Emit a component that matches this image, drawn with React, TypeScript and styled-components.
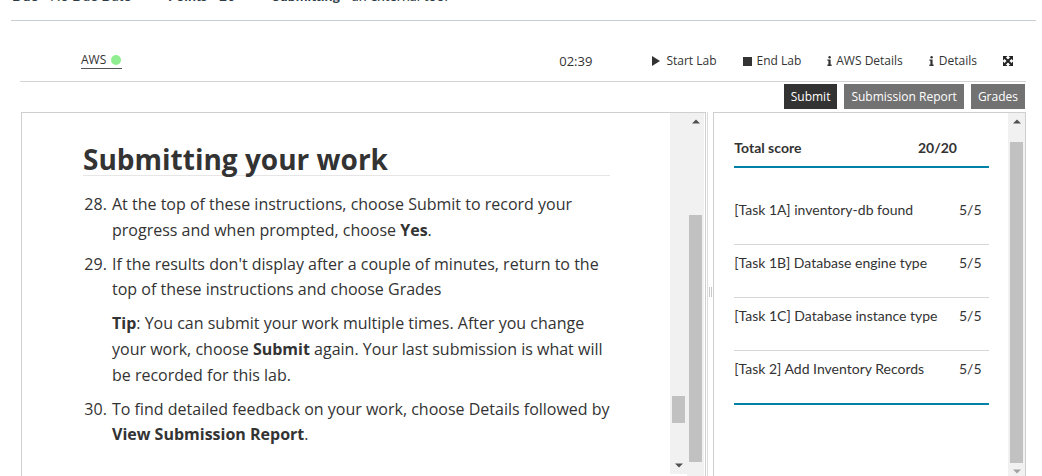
import React from "react";
import styled, { createGlobalStyle } from "styled-components";

const Global = createGlobalStyle`
  html, body { margin: 0; padding: 0; background: #fff; overflow: hidden; }
  body { font-family: "Open Sans", "Liberation Sans", sans-serif; color: #333; }
  * { box-sizing: content-box; }
`;

const Meta = styled.div`
  margin: -14px 6px 0 11px;
  padding-left: 1px;
  height: 34px;
  border-bottom: 1px solid #c7cdd1;
  display: flex;
  font-family: Lato, "Liberation Sans", sans-serif;
  font-size: 14px;
  line-height: 20px;
  color: #2d3b45;
`;

const MetaItem = styled.div`
  display: flex;
  margin-right: 37px;
`;

const MetaTitle = styled.span`
  font-weight: 700;
  margin-right: 12px;
`;

const Lab = styled.div`
  margin-left: 20px;
  width: 1006px;
`;

const Toolbar = styled.div`
  display: flex;
  align-items: flex-start;
  height: 29px;
  padding: 31px 13px 0 0;
  border-bottom: 1px solid #d4d4d4;
  font-size: 12px;
  line-height: 18px;
  color: #333;
`;

const AwsLink = styled.span`
  margin-left: 61px;
  display: inline-flex;
  align-items: center;
  gap: 5px;
  border-bottom: 1px solid #555;
  height: 17px;
  line-height: 17px;
  margin-top: -1px;
`;

const Dot = styled.span`
  width: 10px;
  height: 10px;
  border-radius: 50%;
  background: #90ee90;
  margin-right: 1px;
`;

const Timer = styled.span`
  margin-left: auto;
  margin-right: 60px;
  font-size: 13px;
`;

const ToolItem = styled.span<{ $gap?: number }>`
  display: inline-flex;
  align-items: center;
  height: 18px;
  gap: ${(p) => p.$gap ?? 6}px;
  margin-right: 26px;
  &:last-child { margin-right: 0; }
`;

const ActionRow = styled.div`
  display: flex;
  justify-content: flex-end;
  gap: 7px;
  padding: 2px 1px 0 0;
`;

const Btn = styled.button<{ $dark?: boolean }>`
  height: 25px;
  padding: 0 7px;
  border: none;
  background: ${(p) => (p.$dark ? "#333" : "#727272")};
  color: #fff;
  font-family: "Open Sans", "Liberation Sans", sans-serif;
  font-size: 12px;
  line-height: 25px;
  cursor: pointer;
`;

const Panels = styled.div`
  display: flex;
  margin: 3px 0 0 1px;
  height: 380px;
`;

const LeftPane = styled.div`
  width: 683px;
  border: 1px solid #cfcfcf;
  border-bottom: none;
  padding-right: 1px;
  display: flex;
  align-items: flex-start;
  overflow: hidden;
`;

const Doc = styled.div`
  width: 587px;
  height: 350px;
  padding: 31px 0 0 61px;
  overflow: hidden;
`;

const Heading = styled.h1`
  margin: 0;
  width: 527px;
  font-size: 28px;
  line-height: 31px;
  font-weight: 700;
  color: #333;
  border-bottom: 1px solid #e6e6e6;
`;

const Steps = styled.ol`
  margin: 16px 0 0;
  padding-left: 28px;
  width: 504px;
  font-size: 16px;
  line-height: 25.6px;
  color: #333;
`;

const Step = styled.li`
  margin-bottom: 8.5px;
  padding-left: 1px;
`;

const Tip = styled.p`
  margin: 8.5px 0 0;
  width: 498px;
`;

const ScrollBar = styled.div<{ $h?: number }>`
  width: 17px;
  height: ${(p) => (p.$h ? `${p.$h}px` : "auto")};
  align-self: ${(p) => (p.$h ? "flex-start" : "stretch")};
  background: #f1f1f1;
  display: flex;
  flex-direction: column;
  flex-shrink: 0;
`;

const ArrowBox = styled.div`
  height: 17px;
  display: flex;
  align-items: center;
  justify-content: center;
  flex-shrink: 0;
`;

const Track = styled.div`
  flex: 1;
  display: flex;
  flex-direction: column;
`;

const Thumb = styled.div<{ $top: number; $h: number }>`
  margin: ${(p) => p.$top}px 2px 0;
  height: ${(p) => p.$h}px;
  background: #c1c1c1;
`;

const Splitter = styled.div`
  width: 5px;
  margin-left: 1px;
  border-left: 1px solid #dcdcdc;
  display: flex;
  align-items: center;
  justify-content: center;
  padding-bottom: 20px;
`;

const Grip = styled.div`
  width: 1px;
  height: 10px;
  border-left: 1px solid #c8c8c8;
  border-right: 1px solid #c8c8c8;
`;

const RightPane = styled.div`
  width: 311px;
  border: 1px solid #cfcfcf;
  border-bottom: none;
  display: flex;
`;

const Scores = styled.div`
  flex: 1;
  padding: 25px 19px 0 20px;
  font-family: Lato, "Liberation Sans", sans-serif;
  font-size: 14px;
  line-height: 20px;
  color: #333;
`;

const ScoreHead = styled.div`
  display: flex;
  font-weight: 700;
  padding-bottom: 8px;
  border-bottom: 2px solid #0081a8;
`;

const Grow = styled.span`
  flex: 1;
  white-space: nowrap;
`;

const HeadValue = styled.span`
  padding-right: 32px;
`;

const ScoreList = styled.div`
  padding-top: 24px;
  border-bottom: 2px solid #0081a8;
`;

const ScoreRow = styled.div`
  display: flex;
  padding: 8px 0 24px;
  border-bottom: 1px solid #d6d6d6;
  &:last-child { border-bottom: none; }
`;

const RowValue = styled.span`
  width: 30px;
`;

const Up = ({ on }: { on?: boolean }) => (
  <svg width="8" height="5" viewBox="0 0 8 5">
    <path d="M0 4.5 L4 0.5 L8 4.5 Z" fill={on ? "#505050" : "#a3a3a3"} />
  </svg>
);
const Down = ({ on }: { on?: boolean }) => (
  <svg width="8" height="5" viewBox="0 0 8 5">
    <path d="M0 0.5 L8 0.5 L4 4.5 Z" fill={on ? "#505050" : "#a3a3a3"} />
  </svg>
);

const PlayIcon = () => (
  <svg width="8" height="10" viewBox="0 0 8 10">
    <path d="M0 0 L8 5 L0 10 Z" fill="#333" />
  </svg>
);
const StopIcon = () => (
  <svg width="9" height="9" viewBox="0 0 9 9">
    <rect width="9" height="9" fill="#333" />
  </svg>
);
const InfoIcon = () => (
  <svg width="5" height="10" viewBox="0 0 5 10">
    <circle cx="2.6" cy="1.2" r="1.2" fill="#333" />
    <path d="M0.4 3.4 H3.6 V8.6 H4.6 V10 H0.4 V8.6 H1.4 V4.8 H0.4 Z" fill="#333" />
  </svg>
);
const ExpandIcon = () => (
  <svg width="10" height="10" viewBox="0 0 10 10">
    <path d="M2 2 L8 8 M8 2 L2 8" stroke="#222" strokeWidth="2" />
    <path d="M0 0 H4.5 L0 4.5 Z M10 0 V4.5 L5.5 0 Z M0 10 V5.5 L4.5 10 Z M10 10 H5.5 L10 5.5 Z" fill="#222" />
  </svg>
);

const scores = [
  ["[Task 1A] inventory-db found", "5/5"],
  ["[Task 1B] Database engine type", "5/5"],
  ["[Task 1C] Database instance type", "5/5"],
  ["[Task 2] Add Inventory Records", "5/5"],
];

export default function App() {
  return (
    <>
      <Global />
      <Meta>
        <MetaItem>
          <MetaTitle>Due</MetaTitle>No Due Date
        </MetaItem>
        <MetaItem>
          <MetaTitle>Points</MetaTitle>20
        </MetaItem>
        <MetaItem>
          <MetaTitle>Submitting</MetaTitle>an external tool
        </MetaItem>
      </Meta>
      <Lab>
        <Toolbar>
          <AwsLink>
            AWS <Dot />
          </AwsLink>
          <Timer>02:39</Timer>
          <ToolItem>
            <PlayIcon />
            Start Lab
          </ToolItem>
          <ToolItem $gap={5}>
            <StopIcon />
            End Lab
          </ToolItem>
          <ToolItem $gap={4}>
            <InfoIcon />
            AWS Details
          </ToolItem>
          <ToolItem $gap={5}>
            <InfoIcon />
            Details
          </ToolItem>
          <ToolItem>
            <ExpandIcon />
          </ToolItem>
        </Toolbar>
        <ActionRow>
          <Btn $dark>Submit</Btn>
          <Btn>Submission Report</Btn>
          <Btn>Grades</Btn>
        </ActionRow>
        <Panels>
          <LeftPane>
            <Doc>
              <Heading>Submitting your work</Heading>
              <Steps start={28}>
                <Step>
                  At the top of these instructions, choose Submit to record your progress and when
                  prompted, choose <b>Yes</b>.
                </Step>
                <Step>
                  If the results don't display after a couple of minutes, return to the top of these
                  instructions and choose Grades
                  <Tip>
                    <b>Tip</b>: You can submit your work multiple times. After you change your work,
                    choose <b>Submit</b> again. Your last submission is what will be recorded for
                    this lab.
                  </Tip>
                </Step>
                <Step>
                  To find detailed feedback on your work, choose Details followed by{" "}
                  <b>View Submission Report</b>.
                </Step>
              </Steps>
            </Doc>
            <ScrollBar $h={361}>
              <Track>
                <Thumb $top={283} $h={27} />
              </Track>
              <ArrowBox>
                <Down on />
              </ArrowBox>
            </ScrollBar>
            <ScrollBar $h={380}>
              <ArrowBox>
                <Up on />
              </ArrowBox>
              <Track>
                <Thumb $top={85} $h={247} />
              </Track>
              <ArrowBox>
                <Down />
              </ArrowBox>
            </ScrollBar>
          </LeftPane>
          <Splitter>
            <Grip />
          </Splitter>
          <RightPane>
            <Scores>
              <ScoreHead>
                <Grow>Total score</Grow>
                <HeadValue>20/20</HeadValue>
              </ScoreHead>
              <ScoreList>
                {scores.map(([label, value]) => (
                  <ScoreRow key={label}>
                    <Grow>{label}</Grow>
                    <RowValue>{value}</RowValue>
                  </ScoreRow>
                ))}
              </ScoreList>
            </Scores>
            <ScrollBar $h={367}>
              <ArrowBox>
                <Up on />
              </ArrowBox>
              <Track>
                <Thumb $top={12} $h={321} />
              </Track>
              <ArrowBox>
                <Down />
              </ArrowBox>
            </ScrollBar>
          </RightPane>
        </Panels>
      </Lab>
    </>
  );
}
